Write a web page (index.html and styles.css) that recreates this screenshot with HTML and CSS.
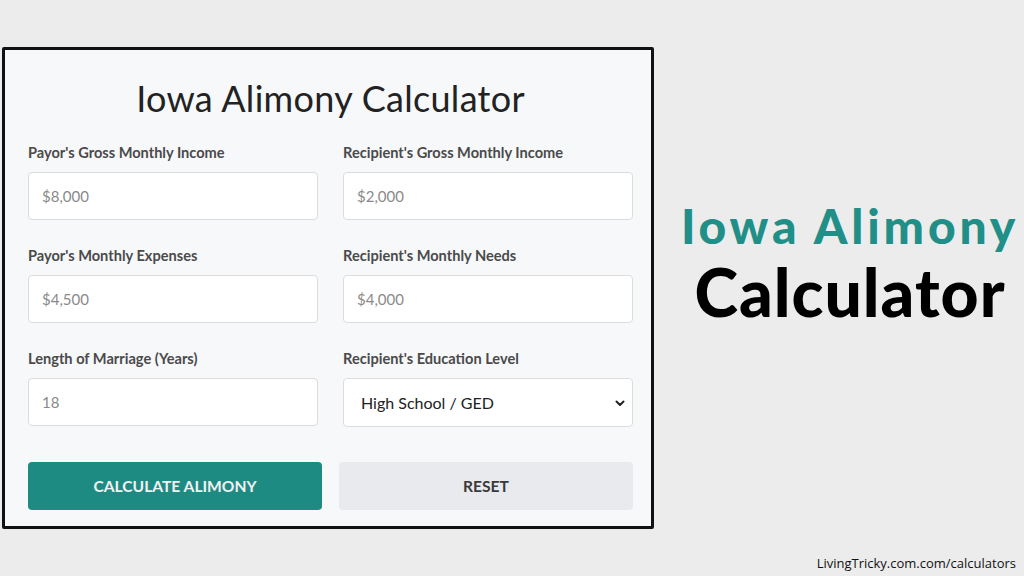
FILE: index.html
```html
<!DOCTYPE html>
<html lang="en">
<head>
    <meta charset="UTF-8">
    <meta name="viewport" content="width=device-width, initial-scale=1.0">
    <title>Iowa Alimony Calculator</title>
    <link rel="stylesheet" href="styles.css">
</head>
<body>
    <div class="page">
        <div class="calculator">
            <h1>Iowa Alimony Calculator</h1>

            <div class="fields">
                <div class="field">
                    <label>Payor's Gross Monthly Income</label>
                    <input type="text" placeholder="$8,000">
                </div>
                <div class="field">
                    <label>Recipient's Gross Monthly Income</label>
                    <input type="text" placeholder="$2,000">
                </div>
                <div class="field">
                    <label>Payor's Monthly Expenses</label>
                    <input type="text" placeholder="$4,500">
                </div>
                <div class="field">
                    <label>Recipient's Monthly Needs</label>
                    <input type="text" placeholder="$4,000">
                </div>
                <div class="field">
                    <label>Length of Marriage (Years)</label>
                    <input type="text" placeholder="18">
                </div>
                <div class="field">
                    <label>Recipient's Education Level</label>
                    <div class="select">
                        <span>High School / GED</span>
                        <svg width="12" height="12" viewBox="0 0 12 12">
                            <path d="M2.5 4.5 L6 8 L9.5 4.5" fill="none" stroke="#222" stroke-width="2" stroke-linecap="round" stroke-linejoin="round"/>
                        </svg>
                    </div>
                </div>
            </div>

            <div class="actions">
                <button class="btn btn-primary">CALCULATE ALIMONY</button>
                <button class="btn btn-secondary">RESET</button>
            </div>
        </div>

        <div class="headline">
            <div class="headline-top">Iowa Alimony</div>
            <div class="headline-bottom">Calculator</div>
        </div>
    </div>

    <div class="footer">LivingTricky.com.com/calculators</div>
</body>
</html>
```

FILE: styles.css
```css
body {
    margin: 0;
    background: #ececec;
    font-family: 'Lato', 'Open Sans', sans-serif;
    width: 1024px;
    height: 576px;
    overflow: hidden;
}

.page {
    display: flex;
    align-items: flex-start;
    padding: 47px 0 0 2px;
}

.calculator {
    width: 605px;
    height: 447px;
    border: 3px solid #111;
    border-radius: 2px;
    background: #f7f8fa;
    padding: 29px 18px 0 23px;
}

h1 {
    margin: 0 0 28px;
    text-align: center;
    font-size: 36px;
    line-height: 38px;
    font-weight: 400;
    color: #222;
    letter-spacing: 0.3px;
}

.fields {
    display: grid;
    grid-template-columns: 290px 290px;
    column-gap: 25px;
    row-gap: 28px;
}

.field label {
    display: block;
    font-size: 14.6px;
    line-height: 16px;
    font-weight: 700;
    color: #4a4a4a;
    margin-bottom: 11px;
}

.field input,
.select {
    display: block;
    width: 100%;
    height: 48px;
    box-sizing: border-box;
    border: 1px solid #dcdcdc;
    border-radius: 4px;
    background: #fff;
    padding: 0 13px;
    font-family: inherit;
    font-size: 15px;
    outline: none;
}

.field input::placeholder {
    color: #8a8a8a;
}

.select {
    height: 49px;
    display: flex;
    align-items: center;
    justify-content: space-between;
    padding: 0 6px 0 17px;
    color: #222;
    font-size: 16px;
}

.actions {
    display: grid;
    grid-template-columns: 294px 294px;
    column-gap: 17px;
    margin-top: 35px;
}

.btn {
    height: 48px;
    border: none;
    border-radius: 4px;
    font-family: inherit;
    font-size: 15.6px;
    font-weight: 700;
}

.btn-primary {
    background: #1e8b82;
    color: #f2f2f2;
}

.btn-secondary {
    background: #e8eaed;
    color: #3a3a3a;
}

.headline {
    flex: 1;
    text-align: center;
    padding-top: 149px;
    padding-left: 22px;
    font-weight: 900;
}

.headline-top {
    color: #1f8f87;
    font-size: 48px;
    line-height: 60px;
    letter-spacing: 3.8px;
}

.headline-bottom {
    color: #000;
    font-size: 66px;
    line-height: 72px;
    letter-spacing: 1px;
}

.footer {
    position: absolute;
    right: 8px;
    bottom: 4px;
    font-family: 'Open Sans', sans-serif;
    font-size: 13px;
    color: #111;
}
```
